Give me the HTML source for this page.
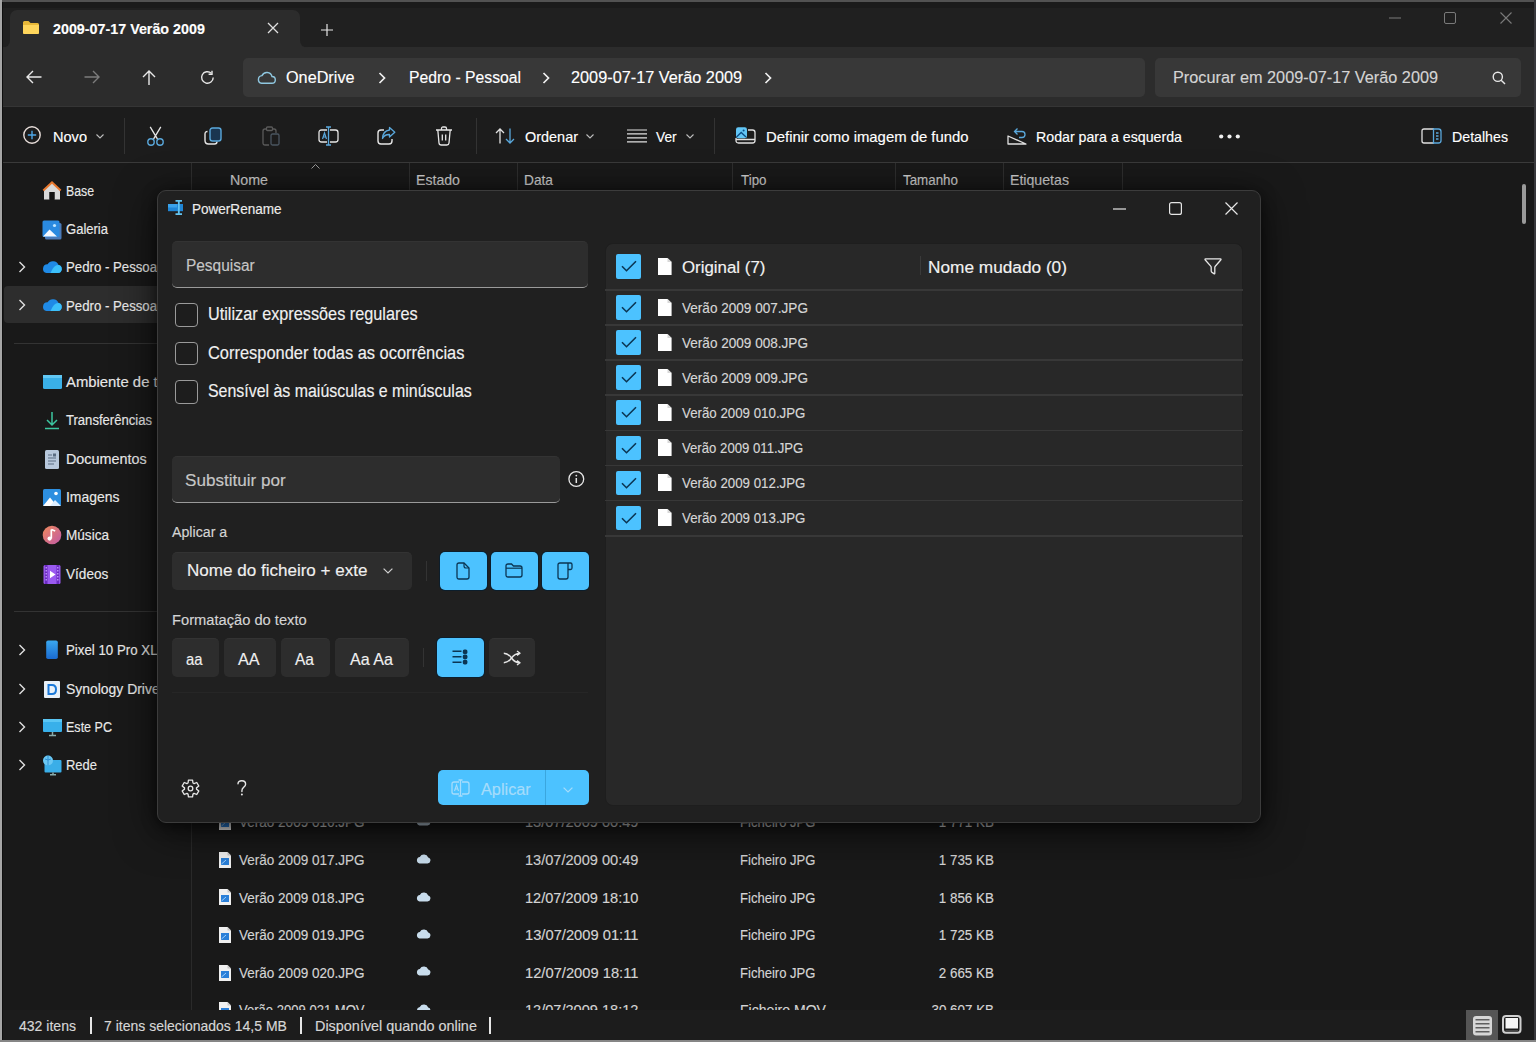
<!DOCTYPE html>
<html><head><meta charset="utf-8"><style>*{box-sizing:border-box;margin:0;padding:0}
html,body{width:1536px;height:1042px;overflow:hidden;background:#191919;font-family:"Liberation Sans",sans-serif;color:#fff}
.a{position:absolute}
.t{position:absolute;white-space:nowrap;line-height:1;-webkit-text-stroke:0.15px currentColor}
svg{position:absolute;overflow:visible}
.ico{stroke:#e8e8e8;fill:none;stroke-width:1.4}
</style></head><body>
<div class="a" style="left:0px;top:0px;width:1536px;height:47px;background:#202020;"></div>
<div class="a" style="left:0px;top:2px;width:1536px;height:6px;background:#1b1b1b;"></div>
<div class="a" style="left:0px;top:47px;width:1536px;height:60px;background:#2c2c2c;"></div>
<div class="a" style="left:0px;top:107px;width:1536px;height:55px;background:#1c1c1c;"></div>
<div class="a" style="left:0px;top:106px;width:1536px;height:1px;background:#353535;"></div>
<div class="a" style="left:0px;top:162px;width:1536px;height:1px;background:#3a3a3a;"></div>
<div class="a" style="left:0px;top:163px;width:1536px;height:849px;background:#191919;"></div>
<div class="a" style="left:0px;top:1010px;width:1536px;height:32px;background:#1c1c1c;"></div>
<div class="a" style="left:10px;top:9.5px;width:289.5px;height:38px;background:#2c2c2c;border-radius:7px 7px 0 0"></div>
<svg style="left:299.5px;top:40px" width="8" height="7.5" viewBox="0 0 8 7.5"><path d="M0 0V7.5H8Q0 7.5 0 0Z" fill="#2c2c2c"/></svg>
<svg style="left:2px;top:40px" width="8" height="7.5" viewBox="0 0 8 7.5"><path d="M8 0V7.5H0Q8 7.5 8 0Z" fill="#2c2c2c"/></svg>
<svg style="left:22px;top:20px" width="18" height="15" viewBox="0 0 18 15"><path d="M1 2.5Q1 1 2.5 1H6.5L8.5 3H15.5Q17 3 17 4.5V12.5Q17 14 15.5 14H2.5Q1 14 1 12.5Z" fill="#e8b838"/><path d="M1 5H17V12.5Q17 14 15.5 14H2.5Q1 14 1 12.5Z" fill="#ffd65c"/></svg>
<div class="t" style="left:53.00px;top:21.69px;font-size:14.71px;color:#ffffff;font-weight:bold;transform:scaleX(0.9728);transform-origin:left top;">2009-07-17 Verão 2009</div>
<svg style="left:267px;top:22px" width="12" height="12" viewBox="0 0 12 12"><path d="M1 1L11 11M11 1L1 11" stroke="#e0e0e0" stroke-width="1.3"/></svg>
<svg style="left:321px;top:23.5px" width="12" height="12" viewBox="0 0 12 12"><path d="M6 0V12M0 6H12" stroke="#e6e6e6" stroke-width="1.2"/></svg>
<svg style="left:1389px;top:17px" width="12" height="2" viewBox="0 0 12 2"><path d="M0 1H12" stroke="#7a7a7a" stroke-width="1"/></svg>
<svg style="left:1444px;top:12px" width="12" height="12" viewBox="0 0 12 12"><rect x="0.5" y="0.5" width="11" height="11" rx="1.5" stroke="#7a7a7a" fill="none"/></svg>
<svg style="left:1500px;top:12px" width="12" height="12" viewBox="0 0 12 12"><path d="M0.5 0.5L11.5 11.5M11.5 0.5L0.5 11.5" stroke="#7a7a7a" stroke-width="1.1"/></svg>
<svg style="left:26px;top:70px" width="16" height="14" viewBox="0 0 16 14"><path d="M15.5 7H1M7 1L1 7L7 13" class="ico"/></svg>
<svg style="left:84px;top:70px" width="16" height="14" viewBox="0 0 16 14"><path d="M0.5 7H15M9 1L15 7L9 13" fill="none" stroke="#7c7c7c" stroke-width="1.4"/></svg>
<svg style="left:142px;top:70px" width="14" height="15" viewBox="0 0 14 15"><path d="M7 15V1M1 7L7 1L13 7" class="ico"/></svg>
<svg style="left:200px;top:70px" width="15" height="15" viewBox="0 0 15 15"><path d="M13.2 7.5A5.8 5.8 0 1 1 11.3 3.2" class="ico"/><path d="M12 0.8V4.2H8.6" class="ico"/></svg>
<div class="a" style="left:243px;top:58px;width:902px;height:39px;background:#383838;border-radius:5px"></div>
<svg style="left:257px;top:71px" width="19" height="13" viewBox="0 0 19 13"><path d="M4.5 12.3H14.8A3.4 3.4 0 0 0 15 5.5A5.3 5.3 0 0 0 5 4.6A3.9 3.9 0 0 0 4.5 12.3Z" fill="none" stroke="#8fc7e0" stroke-width="1.4"/></svg>
<div class="t" style="left:285.70px;top:69.67px;font-size:16.86px;color:#fff;transform:scaleX(0.9621);transform-origin:left top;">OneDrive</div>
<svg style="left:378px;top:72px" width="8" height="12" viewBox="0 0 8 12"><path d="M1.5 1L6.5 6L1.5 11" fill="none" stroke="#f0f0f0" stroke-width="1.7"/></svg>
<div class="t" style="left:409.00px;top:69.67px;font-size:16.86px;color:#fff;transform:scaleX(0.9339);transform-origin:left top;">Pedro - Pessoal</div>
<svg style="left:542px;top:72px" width="8" height="12" viewBox="0 0 8 12"><path d="M1.5 1L6.5 6L1.5 11" fill="none" stroke="#f0f0f0" stroke-width="1.7"/></svg>
<div class="t" style="left:571.00px;top:69.67px;font-size:16.86px;color:#fff;transform:scaleX(0.9654);transform-origin:left top;">2009-07-17 Verão 2009</div>
<svg style="left:764px;top:72px" width="8" height="12" viewBox="0 0 8 12"><path d="M1.5 1L6.5 6L1.5 11" fill="none" stroke="#f0f0f0" stroke-width="1.7"/></svg>
<div class="a" style="left:1155px;top:58px;width:366px;height:39px;background:#383838;border-radius:5px"></div>
<div class="t" style="left:1173.00px;top:69.67px;font-size:16.86px;color:#d4d4d4;transform:scaleX(0.9652);transform-origin:left top;">Procurar em 2009-07-17 Verão 2009</div>
<svg style="left:1492px;top:71px" width="14" height="14" viewBox="0 0 14 14"><circle cx="5.8" cy="5.8" r="4.6" class="ico"/><path d="M9.2 9.2L13 13" class="ico"/></svg>
<svg style="left:23px;top:126px" width="18" height="18" viewBox="0 0 18 18"><circle cx="9" cy="9" r="8.2" fill="none" stroke="#e6dcd8" stroke-width="1.4"/><path d="M9 4.8V13.2M4.8 9H13.2" stroke="#4ea6e6" stroke-width="1.4"/></svg>
<div class="t" style="left:52.70px;top:129.61px;font-size:14.57px;color:#fff;transform:scaleX(0.9996);transform-origin:left top;">Novo</div>
<svg style="left:96px;top:134px" width="8" height="5" viewBox="0 0 8 5"><path d="M0.5 0.5L4 4L7.5 0.5" fill="none" stroke="#bdbdbd" stroke-width="1.1"/></svg>
<div class="a" style="left:124px;top:118px;width:1px;height:36px;background:#333;"></div>
<svg style="left:146px;top:126px" width="19" height="20" viewBox="0 0 19 20"><path d="M4.2 0.8L11.5 13.2M14.8 0.8L7.5 13.2" fill="none" stroke="#e6e6e6" stroke-width="1.3"/><circle cx="5" cy="16" r="3.2" fill="none" stroke="#5aa8dc" stroke-width="1.4"/><circle cx="14" cy="16" r="3.2" fill="none" stroke="#5aa8dc" stroke-width="1.4"/></svg>
<svg style="left:204px;top:127px" width="19" height="18" viewBox="0 0 19 18"><path d="M3.5 4.5Q1 4.5 1 7V13.5Q1 17 4.5 17H10.5Q13 17 13 14.5" fill="none" stroke="#e6e6e6" stroke-width="1.4"/><rect x="6" y="1" width="11" height="13" rx="2.5" fill="#1a3550" stroke="#5aa8dc" stroke-width="1.4"/></svg>
<svg style="left:262px;top:126px" width="18" height="20" viewBox="0 0 18 20"><path d="M7 19H3Q1 19 1 17V5Q1 3 3 3H4.5M10.5 3H12Q14 3 14 5V7" fill="none" stroke="#5a5a5a" stroke-width="1.3"/><rect x="4.5" y="1" width="6" height="3.5" rx="1" fill="none" stroke="#5a5a5a" stroke-width="1.3"/><rect x="9" y="8" width="8" height="11" rx="1.5" fill="none" stroke="#4a5560" stroke-width="1.3"/></svg>
<svg style="left:318px;top:126px" width="21" height="20" viewBox="0 0 21 20"><path d="M9 4H3.5Q1 4 1 6.5V13.5Q1 16 3.5 16H9M12 4H17.5Q20 4 20 6.5V13.5Q20 16 17.5 16H12" fill="none" stroke="#e6e6e6" stroke-width="1.3"/><path d="M10.5 1.5V18.5M8 1H13M8 19H13" fill="none" stroke="#5aa8dc" stroke-width="1.3"/><path d="M4.5 13L6.5 7L8.5 13M5.2 11H7.8" fill="none" stroke="#5aa8dc" stroke-width="1.2"/></svg>
<svg style="left:377px;top:126px" width="19" height="19" viewBox="0 0 19 19"><path d="M7 4H4Q1 4 1 7V15Q1 18 4 18H12Q15 18 15 15V13" fill="none" stroke="#e6e6e6" stroke-width="1.4"/><path d="M12.5 1.5L17.8 6.2L12.5 11V8.5Q7.5 8.3 5.5 12.5Q5.8 5 12.5 4Z" fill="none" stroke="#5aa8dc" stroke-width="1.3" stroke-linejoin="round"/></svg>
<svg style="left:435px;top:126px" width="18" height="20" viewBox="0 0 18 20"><path d="M1 4H17M6.5 4V2.5Q6.5 1 8 1H10Q11.5 1 11.5 2.5V4M2.8 4L4 17Q4.2 19 6.2 19H11.8Q13.8 19 14 17L15.2 4M7.3 8.5V14.5M10.7 8.5V14.5" fill="none" stroke="#e6e6e6" stroke-width="1.3"/></svg>
<div class="a" style="left:476px;top:118px;width:1px;height:36px;background:#333;"></div>
<svg style="left:495px;top:128px" width="21" height="16" viewBox="0 0 21 16"><path d="M5 15.5V1M1 5L5 1L9 5" fill="none" stroke="#e0e0e0" stroke-width="1.3"/><path d="M15 0.5V15M11 11L15 15L19 11" fill="none" stroke="#5aa8dc" stroke-width="1.3"/></svg>
<div class="t" style="left:524.60px;top:129.61px;font-size:14.57px;color:#fff;transform:scaleX(0.9916);transform-origin:left top;">Ordenar</div>
<svg style="left:586px;top:134px" width="8" height="5" viewBox="0 0 8 5"><path d="M0.5 0.5L4 4L7.5 0.5" fill="none" stroke="#bdbdbd" stroke-width="1.1"/></svg>
<svg style="left:627px;top:129px" width="20" height="14" viewBox="0 0 20 14"><path d="M0 1H20M0 4.8H20M0 8.8H20M0 12.8H20" stroke="#e0e0e0" stroke-width="1.2"/></svg>
<div class="t" style="left:656.00px;top:129.61px;font-size:14.57px;color:#fff;transform:scaleX(0.9419);transform-origin:left top;">Ver</div>
<svg style="left:686px;top:134px" width="8" height="5" viewBox="0 0 8 5"><path d="M0.5 0.5L4 4L7.5 0.5" fill="none" stroke="#bdbdbd" stroke-width="1.1"/></svg>
<div class="a" style="left:714px;top:118px;width:1px;height:36px;background:#333;"></div>
<svg style="left:735px;top:126px" width="21" height="18" viewBox="0 0 21 18"><rect x="1" y="1.2" width="11" height="11" rx="2.2" fill="#62c6f6"/><path d="M1.5 11L6.2 6.5L11 11" fill="none" stroke="#0b4d86" stroke-width="1.3"/><circle cx="8.6" cy="4.4" r="1" fill="#0b4d86"/><path d="M13 4H17.5Q20 4 20 6.5V14.5Q20 17 17.5 17H3.5Q1 17 1 14.5V12M1 13.5H20" fill="none" stroke="#e0e0e0" stroke-width="1.3"/></svg>
<div class="t" style="left:765.60px;top:129.61px;font-size:14.57px;color:#fff;transform:scaleX(1.0216);transform-origin:left top;">Definir como imagem de fundo</div>
<svg style="left:1007px;top:127px" width="20" height="18" viewBox="0 0 20 18"><path d="M1 17H19L1 9Z" fill="none" stroke="#e0e0e0" stroke-width="1.3" stroke-linejoin="round"/><path d="M8 4.5H15Q18 4.5 18 7.5Q18 10.5 15 10.5H12M10.5 1.5L7.5 4.5L10.5 7.5" fill="none" stroke="#5aa8dc" stroke-width="1.3"/></svg>
<div class="t" style="left:1036.00px;top:129.61px;font-size:14.57px;color:#fff;transform:scaleX(0.9743);transform-origin:left top;">Rodar para a esquerda</div>
<svg style="left:1219px;top:134px" width="21" height="5" viewBox="0 0 21 5"><circle cx="2.2" cy="2.5" r="2.1" fill="#f0f0f0"/><circle cx="10.5" cy="2.5" r="2.1" fill="#f0f0f0"/><circle cx="18.8" cy="2.5" r="2.1" fill="#f0f0f0"/></svg>
<svg style="left:1421px;top:128px" width="21" height="16" viewBox="0 0 21 16"><path d="M13 1H3Q1 1 1 3V13Q1 15 3 15H13" fill="none" stroke="#e0e0e0" stroke-width="1.3"/><path d="M12.5 1H17.5Q20 1 20 3.5V12.5Q20 15 17.5 15H12.5ZM15 5H17.5M15 8H17.5M15 11H17.5" fill="none" stroke="#5aa8dc" stroke-width="1.3"/></svg>
<div class="t" style="left:1451.60px;top:129.61px;font-size:14.57px;color:#fff;transform:scaleX(0.9738);transform-origin:left top;">Detalhes</div>
<div class="a" style="left:191px;top:163px;width:1px;height:28px;background:#2e2e2e;"></div>
<div class="a" style="left:191px;top:191px;width:1px;height:819px;background:#2a2a2a;"></div>
<div class="t" style="left:230.00px;top:173.84px;font-size:13.71px;color:#cccccc;transform:scaleX(1.0388);transform-origin:left top;">Nome</div>
<svg style="left:311px;top:164px" width="9" height="5" viewBox="0 0 9 5"><path d="M0.5 4.5L4.5 0.5L8.5 4.5" fill="none" stroke="#9a9a9a" stroke-width="1"/></svg>
<div class="a" style="left:409px;top:163px;width:1px;height:28px;background:#2e2e2e;"></div>
<div class="a" style="left:517px;top:163px;width:1px;height:28px;background:#2e2e2e;"></div>
<div class="a" style="left:732px;top:163px;width:1px;height:28px;background:#2e2e2e;"></div>
<div class="a" style="left:895px;top:163px;width:1px;height:28px;background:#2e2e2e;"></div>
<div class="a" style="left:1003px;top:163px;width:1px;height:28px;background:#2e2e2e;"></div>
<div class="a" style="left:1122px;top:163px;width:1px;height:28px;background:#2e2e2e;"></div>
<div class="t" style="left:416.00px;top:173.84px;font-size:13.71px;color:#cccccc;transform:scaleX(1.0306);transform-origin:left top;">Estado</div>
<div class="t" style="left:524.00px;top:173.84px;font-size:13.71px;color:#cccccc;transform:scaleX(1.0011);transform-origin:left top;">Data</div>
<div class="t" style="left:741.00px;top:173.84px;font-size:13.71px;color:#cccccc;transform:scaleX(0.9745);transform-origin:left top;">Tipo</div>
<div class="t" style="left:903.00px;top:173.84px;font-size:13.71px;color:#cccccc;transform:scaleX(0.9750);transform-origin:left top;">Tamanho</div>
<div class="t" style="left:1010.00px;top:173.84px;font-size:13.71px;color:#cccccc;transform:scaleX(1.0319);transform-origin:left top;">Etiquetas</div>
<div class="a" style="left:1522px;top:184px;width:4px;height:40px;background:#9a9a9a;border-radius:2px"></div>
<div class="a" style="left:4px;top:286px;width:187px;height:37px;background:#2d2d2d;border-radius:4px"></div>
<div class="a" style="left:14px;top:343px;width:177px;height:1px;background:#333333;"></div>
<div class="a" style="left:14px;top:611px;width:177px;height:1px;background:#333333;"></div>
<svg style="left:42px;top:180px" width="21" height="21" viewBox="0 0 21 21"><path d="M2 9.5V19.5H7.5V12H12.5V19.5H18V9.5L10 2.5Z" fill="#d9d9d9"/><path d="M0.6 9.8L10 1L19.4 9.8L18 11.2L10 3.8L2 11.2Z" fill="#e8782e"/><path d="M7.5 12H12.5V19.5H7.5Z" fill="#141414"/></svg>
<div class="t" style="left:66.00px;top:183.56px;font-size:14.29px;color:#e8e8e8;transform:scaleX(0.8599);transform-origin:left top;">Base</div>
<svg style="left:42px;top:219px" width="21" height="21" viewBox="0 0 21 21"><rect x="3" y="4" width="16.5" height="16.5" rx="1.5" fill="#4a7ab8"/><rect x="0.5" y="1.5" width="17" height="16.5" rx="1.5" fill="#2a8ae0"/><path d="M1 17.5L7.5 10.5L15 17.5Z" fill="#f4f8ff"/><circle cx="12.5" cy="6.5" r="1.6" fill="#bfe6ff"/></svg>
<div class="t" style="left:66.00px;top:221.88px;font-size:14.29px;color:#e8e8e8;transform:scaleX(0.9121);transform-origin:left top;">Galeria</div>
<svg style="left:18px;top:261px" width="8" height="12" viewBox="0 0 8 12"><path d="M1.5 1L6.5 6L1.5 11" fill="none" stroke="#e0e0e0" stroke-width="1.4"/></svg>
<svg style="left:42px;top:257px" width="21" height="21" viewBox="0 0 21 21"><path d="M4.5 16H16A4 4 0 0 0 16.6 8.1A6.2 6.2 0 0 0 5.6 7.3A4.4 4.4 0 0 0 4.5 16Z" fill="#1f8ae6"/><path d="M8.5 16H16A4 4 0 0 0 16.6 8.1Q12 7.5 8.5 16Z" fill="#3cc0fa"/></svg>
<div class="t" style="left:66.00px;top:260.20px;font-size:14.29px;color:#e8e8e8;transform:scaleX(0.9250);transform-origin:left top;">Pedro - Pessoal</div>
<svg style="left:18px;top:299px" width="8" height="12" viewBox="0 0 8 12"><path d="M1.5 1L6.5 6L1.5 11" fill="none" stroke="#e0e0e0" stroke-width="1.4"/></svg>
<svg style="left:42px;top:295px" width="21" height="21" viewBox="0 0 21 21"><path d="M4.5 16H16A4 4 0 0 0 16.6 8.1A6.2 6.2 0 0 0 5.6 7.3A4.4 4.4 0 0 0 4.5 16Z" fill="#1f8ae6"/><path d="M8.5 16H16A4 4 0 0 0 16.6 8.1Q12 7.5 8.5 16Z" fill="#3cc0fa"/></svg>
<div class="t" style="left:66.00px;top:298.52px;font-size:14.29px;color:#e8e8e8;transform:scaleX(0.9250);transform-origin:left top;">Pedro - Pessoal</div>
<svg style="left:42px;top:372px" width="21" height="21" viewBox="0 0 21 21"><rect x="1" y="3" width="19" height="14" rx="1.5" fill="#3ab0e8"/><rect x="1" y="3" width="19" height="3" fill="#62c8f4"/></svg>
<div class="t" style="left:66.00px;top:375.16px;font-size:14.29px;color:#e8e8e8;transform:scaleX(1.0400);transform-origin:left top;">Ambiente de trabalho</div>
<svg style="left:42px;top:410px" width="21" height="21" viewBox="0 0 21 21"><path d="M10 2V15M5 10L10 15L15 10M3 18.5H17" fill="none" stroke="#3cc6a0" stroke-width="1.5"/></svg>
<div class="t" style="left:66.00px;top:413.48px;font-size:14.29px;color:#e8e8e8;transform:scaleX(0.9154);transform-origin:left top;">Transferências</div>
<svg style="left:42px;top:449px" width="21" height="21" viewBox="0 0 21 21"><rect x="3" y="1" width="14" height="19" rx="1.5" fill="#b8c8dc"/><path d="M6 6H10M6 9H14M6 12H14M6 15H12" stroke="#5a6c82" stroke-width="1.2"/><rect x="11" y="4.5" width="3" height="3" fill="#5a6c82"/></svg>
<div class="t" style="left:66.00px;top:451.80px;font-size:14.29px;color:#e8e8e8;transform:scaleX(1.0051);transform-origin:left top;">Documentos</div>
<svg style="left:42px;top:487px" width="21" height="21" viewBox="0 0 21 21"><rect x="1" y="2" width="18" height="17" rx="1.5" fill="#2d8fe0"/><path d="M1 19L8 10.5L15 19Z" fill="#fff"/><path d="M8 19L13 13L19 19Z" fill="#dfefff"/><circle cx="14" cy="6.5" r="1.8" fill="#fff"/></svg>
<div class="t" style="left:66.00px;top:490.12px;font-size:14.29px;color:#e8e8e8;transform:scaleX(0.9747);transform-origin:left top;">Imagens</div>
<svg style="left:42px;top:525px" width="21" height="21" viewBox="0 0 21 21"><defs><linearGradient id="gmu" x1="0" y1="0" x2="1" y2="1"><stop offset="0" stop-color="#f08a5a"/><stop offset="1" stop-color="#c05aa8"/></linearGradient></defs><circle cx="10" cy="10" r="9.3" fill="url(#gmu)"/><path d="M9.3 4.5V13.5M9.3 4.5L13.2 6" stroke="#fff" stroke-width="1.7" fill="none"/><circle cx="7.6" cy="13.6" r="2.1" fill="#fff"/></svg>
<div class="t" style="left:66.00px;top:528.44px;font-size:14.29px;color:#e8e8e8;transform:scaleX(0.9503);transform-origin:left top;">Música</div>
<svg style="left:42px;top:564px" width="21" height="21" viewBox="0 0 21 21"><rect x="1.5" y="1" width="17" height="19" rx="1.5" fill="#9a5af0"/><path d="M4.2 1V20M15.8 1V20" stroke="#6a2ac0" stroke-width="2.6"/><path d="M4.2 3V18M15.8 3V18" stroke="#c8a8ff" stroke-width="1.2" stroke-dasharray="1.5 1.5"/><path d="M8 6.8L13.5 10.5L8 14.2Z" fill="#fff"/></svg>
<div class="t" style="left:66.00px;top:566.76px;font-size:14.29px;color:#e8e8e8;transform:scaleX(0.9534);transform-origin:left top;">Vídeos</div>
<svg style="left:18px;top:644px" width="8" height="12" viewBox="0 0 8 12"><path d="M1.5 1L6.5 6L1.5 11" fill="none" stroke="#e0e0e0" stroke-width="1.4"/></svg>
<svg style="left:42px;top:640px" width="21" height="21" viewBox="0 0 21 21"><defs><linearGradient id="gph" x1="0" y1="0" x2="0" y2="1"><stop offset="0" stop-color="#3aa8f0"/><stop offset="1" stop-color="#1a6ad0"/></linearGradient></defs><rect x="4.2" y="0.5" width="11.6" height="18.6" rx="1.8" fill="url(#gph)"/></svg>
<div class="t" style="left:66.00px;top:643.40px;font-size:14.29px;color:#e8e8e8;transform:scaleX(0.9300);transform-origin:left top;">Pixel 10 Pro XL</div>
<svg style="left:18px;top:683px" width="8" height="12" viewBox="0 0 8 12"><path d="M1.5 1L6.5 6L1.5 11" fill="none" stroke="#e0e0e0" stroke-width="1.4"/></svg>
<svg style="left:42px;top:679px" width="21" height="21" viewBox="0 0 21 21"><rect x="2" y="2" width="16" height="17" rx="1" fill="#e8f0f8"/><path d="M6.5 6H10Q14 6 14 10.5Q14 15 10 15H6.5Z" fill="none" stroke="#1a78d8" stroke-width="2"/></svg>
<div class="t" style="left:66.00px;top:681.72px;font-size:14.29px;color:#e8e8e8;transform:scaleX(0.9750);transform-origin:left top;">Synology Drive</div>
<svg style="left:18px;top:721px" width="8" height="12" viewBox="0 0 8 12"><path d="M1.5 1L6.5 6L1.5 11" fill="none" stroke="#e0e0e0" stroke-width="1.4"/></svg>
<svg style="left:42px;top:717px" width="21" height="21" viewBox="0 0 21 21"><rect x="1" y="2" width="19" height="13" rx="1" fill="#38b0ea"/><rect x="1" y="2" width="19" height="3" fill="#5ac6f4"/><path d="M7 18.5H14M10.5 15V18.5" stroke="#8aa" stroke-width="1.5"/></svg>
<div class="t" style="left:66.00px;top:720.04px;font-size:14.29px;color:#e8e8e8;transform:scaleX(0.8779);transform-origin:left top;">Este PC</div>
<svg style="left:18px;top:759px" width="8" height="12" viewBox="0 0 8 12"><path d="M1.5 1L6.5 6L1.5 11" fill="none" stroke="#e0e0e0" stroke-width="1.4"/></svg>
<svg style="left:42px;top:755px" width="21" height="21" viewBox="0 0 21 21"><rect x="2.5" y="5" width="17" height="12.5" rx="1" fill="#3aaee8"/><path d="M8 19.8H14M11 17.5V19.8" stroke="#8aa" stroke-width="1.5"/><circle cx="6" cy="5.5" r="5" fill="#6ac8f4"/><path d="M3 4Q6 6 9 4M6 0.5V10.5" stroke="#2a8ad0" stroke-width="0.9" fill="none"/></svg>
<div class="t" style="left:66.00px;top:758.36px;font-size:14.29px;color:#e8e8e8;transform:scaleX(0.9078);transform-origin:left top;">Rede</div>
<div class="a" style="left:0;top:0;width:1536px;height:1010px;overflow:hidden">
<svg style="left:218px;top:813px" width="14" height="18" viewBox="0 0 14 18"><path d="M1 1H9.5L13 4.5V17H1Z" fill="#f0f0f0"/><path d="M9.5 1V4.5H13" fill="#c8c8c8"/><rect x="3" y="7" width="8" height="7" fill="#2a7fd8"/><path d="M3.5 13L8 9" stroke="#9cd0ff" stroke-width="1"/></svg>
<div class="t" style="left:239.00px;top:815.11px;font-size:14.57px;color:#d4d4d4;transform:scaleX(0.9284);transform-origin:left top;">Verão 2009 016.JPG</div>
<svg style="left:416px;top:816px" width="15" height="10" viewBox="0 0 15 10"><path d="M3.5 9.5H11.5A3 3 0 0 0 12.2 3.6A4.6 4.6 0 0 0 3.8 3A3.3 3.3 0 0 0 3.5 9.5Z" fill="#c8dcec"/></svg>
<div class="t" style="left:525.00px;top:815.11px;font-size:14.57px;color:#d4d4d4;transform:scaleX(1.0006);transform-origin:left top;">13/07/2009 00:49</div>
<div class="t" style="left:740.00px;top:815.11px;font-size:14.57px;color:#d4d4d4;transform:scaleX(0.8966);transform-origin:left top;">Ficheiro JPG</div>
<div class="t" style="right:542.00px;top:815.11px;font-size:14.57px;color:#d4d4d4;transform:scaleX(0.9200);transform-origin:right top;">1 771 KB</div>
<svg style="left:218px;top:851px" width="14" height="18" viewBox="0 0 14 18"><path d="M1 1H9.5L13 4.5V17H1Z" fill="#f0f0f0"/><path d="M9.5 1V4.5H13" fill="#c8c8c8"/><rect x="3" y="7" width="8" height="7" fill="#2a7fd8"/><path d="M3.5 13L8 9" stroke="#9cd0ff" stroke-width="1"/></svg>
<div class="t" style="left:239.00px;top:853.11px;font-size:14.57px;color:#d4d4d4;transform:scaleX(0.9284);transform-origin:left top;">Verão 2009 017.JPG</div>
<svg style="left:416px;top:854px" width="15" height="10" viewBox="0 0 15 10"><path d="M3.5 9.5H11.5A3 3 0 0 0 12.2 3.6A4.6 4.6 0 0 0 3.8 3A3.3 3.3 0 0 0 3.5 9.5Z" fill="#c8dcec"/></svg>
<div class="t" style="left:525.00px;top:853.11px;font-size:14.57px;color:#d4d4d4;transform:scaleX(1.0006);transform-origin:left top;">13/07/2009 00:49</div>
<div class="t" style="left:740.00px;top:853.11px;font-size:14.57px;color:#d4d4d4;transform:scaleX(0.8966);transform-origin:left top;">Ficheiro JPG</div>
<div class="t" style="right:542.00px;top:853.11px;font-size:14.57px;color:#d4d4d4;transform:scaleX(0.9200);transform-origin:right top;">1 735 KB</div>
<svg style="left:218px;top:888px" width="14" height="18" viewBox="0 0 14 18"><path d="M1 1H9.5L13 4.5V17H1Z" fill="#f0f0f0"/><path d="M9.5 1V4.5H13" fill="#c8c8c8"/><rect x="3" y="7" width="8" height="7" fill="#2a7fd8"/><path d="M3.5 13L8 9" stroke="#9cd0ff" stroke-width="1"/></svg>
<div class="t" style="left:239.00px;top:890.61px;font-size:14.57px;color:#d4d4d4;transform:scaleX(0.9284);transform-origin:left top;">Verão 2009 018.JPG</div>
<svg style="left:416px;top:892px" width="15" height="10" viewBox="0 0 15 10"><path d="M3.5 9.5H11.5A3 3 0 0 0 12.2 3.6A4.6 4.6 0 0 0 3.8 3A3.3 3.3 0 0 0 3.5 9.5Z" fill="#c8dcec"/></svg>
<div class="t" style="left:525.00px;top:890.61px;font-size:14.57px;color:#d4d4d4;transform:scaleX(1.0006);transform-origin:left top;">12/07/2009 18:10</div>
<div class="t" style="left:740.00px;top:890.61px;font-size:14.57px;color:#d4d4d4;transform:scaleX(0.8966);transform-origin:left top;">Ficheiro JPG</div>
<div class="t" style="right:542.00px;top:890.61px;font-size:14.57px;color:#d4d4d4;transform:scaleX(0.9200);transform-origin:right top;">1 856 KB</div>
<svg style="left:218px;top:926px" width="14" height="18" viewBox="0 0 14 18"><path d="M1 1H9.5L13 4.5V17H1Z" fill="#f0f0f0"/><path d="M9.5 1V4.5H13" fill="#c8c8c8"/><rect x="3" y="7" width="8" height="7" fill="#2a7fd8"/><path d="M3.5 13L8 9" stroke="#9cd0ff" stroke-width="1"/></svg>
<div class="t" style="left:239.00px;top:928.11px;font-size:14.57px;color:#d4d4d4;transform:scaleX(0.9284);transform-origin:left top;">Verão 2009 019.JPG</div>
<svg style="left:416px;top:929px" width="15" height="10" viewBox="0 0 15 10"><path d="M3.5 9.5H11.5A3 3 0 0 0 12.2 3.6A4.6 4.6 0 0 0 3.8 3A3.3 3.3 0 0 0 3.5 9.5Z" fill="#c8dcec"/></svg>
<div class="t" style="left:525.00px;top:928.11px;font-size:14.57px;color:#d4d4d4;transform:scaleX(1.0103);transform-origin:left top;">13/07/2009 01:11</div>
<div class="t" style="left:740.00px;top:928.11px;font-size:14.57px;color:#d4d4d4;transform:scaleX(0.8966);transform-origin:left top;">Ficheiro JPG</div>
<div class="t" style="right:542.00px;top:928.11px;font-size:14.57px;color:#d4d4d4;transform:scaleX(0.9200);transform-origin:right top;">1 725 KB</div>
<svg style="left:218px;top:964px" width="14" height="18" viewBox="0 0 14 18"><path d="M1 1H9.5L13 4.5V17H1Z" fill="#f0f0f0"/><path d="M9.5 1V4.5H13" fill="#c8c8c8"/><rect x="3" y="7" width="8" height="7" fill="#2a7fd8"/><path d="M3.5 13L8 9" stroke="#9cd0ff" stroke-width="1"/></svg>
<div class="t" style="left:239.00px;top:965.61px;font-size:14.57px;color:#d4d4d4;transform:scaleX(0.9284);transform-origin:left top;">Verão 2009 020.JPG</div>
<svg style="left:416px;top:966px" width="15" height="10" viewBox="0 0 15 10"><path d="M3.5 9.5H11.5A3 3 0 0 0 12.2 3.6A4.6 4.6 0 0 0 3.8 3A3.3 3.3 0 0 0 3.5 9.5Z" fill="#c8dcec"/></svg>
<div class="t" style="left:525.00px;top:965.61px;font-size:14.57px;color:#d4d4d4;transform:scaleX(1.0103);transform-origin:left top;">12/07/2009 18:11</div>
<div class="t" style="left:740.00px;top:965.61px;font-size:14.57px;color:#d4d4d4;transform:scaleX(0.8966);transform-origin:left top;">Ficheiro JPG</div>
<div class="t" style="right:542.00px;top:965.61px;font-size:14.57px;color:#d4d4d4;transform:scaleX(0.9200);transform-origin:right top;">2 665 KB</div>
<svg style="left:218px;top:1001px" width="14" height="18" viewBox="0 0 14 18"><path d="M1 1H9.5L13 4.5V17H1Z" fill="#f0f0f0"/><path d="M9.5 1V4.5H13" fill="#c8c8c8"/><rect x="3" y="7" width="8" height="7" fill="#2a7fd8"/><path d="M3.5 13L8 9" stroke="#9cd0ff" stroke-width="1"/></svg>
<div class="t" style="left:239.00px;top:1003.11px;font-size:14.57px;color:#d4d4d4;transform:scaleX(0.8963);transform-origin:left top;">Verão 2009 021.MOV</div>
<svg style="left:416px;top:1004px" width="15" height="10" viewBox="0 0 15 10"><path d="M3.5 9.5H11.5A3 3 0 0 0 12.2 3.6A4.6 4.6 0 0 0 3.8 3A3.3 3.3 0 0 0 3.5 9.5Z" fill="#c8dcec"/></svg>
<div class="t" style="left:525.00px;top:1003.11px;font-size:14.57px;color:#d4d4d4;transform:scaleX(1.0006);transform-origin:left top;">12/07/2009 18:12</div>
<div class="t" style="left:740.00px;top:1003.11px;font-size:14.57px;color:#d4d4d4;transform:scaleX(0.9656);transform-origin:left top;">Ficheiro MOV</div>
<div class="t" style="right:542.00px;top:1003.11px;font-size:14.57px;color:#d4d4d4;transform:scaleX(0.9200);transform-origin:right top;">30 607 KB</div>
</div>
<div class="t" style="left:19.00px;top:1018.61px;font-size:14.57px;color:#d6d6d6;transform:scaleX(0.9639);transform-origin:left top;">432 itens</div>
<div class="a" style="left:90px;top:1017px;width:2px;height:17px;background:#e6e6e6;"></div>
<div class="t" style="left:104.00px;top:1018.61px;font-size:14.57px;color:#d6d6d6;transform:scaleX(0.9614);transform-origin:left top;">7 itens selecionados 14,5 MB</div>
<div class="a" style="left:300px;top:1017px;width:2px;height:17px;background:#e6e6e6;"></div>
<div class="t" style="left:315.00px;top:1018.61px;font-size:14.57px;color:#d6d6d6;transform:scaleX(0.9900);transform-origin:left top;">Disponível quando online</div>
<div class="a" style="left:489px;top:1017px;width:2px;height:17px;background:#e6e6e6;"></div>
<div class="a" style="left:1466px;top:1010px;width:32px;height:30px;background:#555555;"></div>
<svg style="left:1473px;top:1016px" width="19" height="20" viewBox="0 0 19 20"><rect x="0" y="0" width="19" height="19.6" rx="3" fill="#d6d6d6"/><path d="M2.5 3.8H16.5M2.5 7.8H16.5M2.5 11.8H16.5M2.5 15.8H16.5" stroke="#5e5e5e" stroke-width="1.6"/></svg>
<svg style="left:1502px;top:1015px" width="20" height="19" viewBox="0 0 20 19"><rect x="1" y="1" width="17.5" height="16.8" rx="3" fill="none" stroke="#d0d0d0" stroke-width="2"/><rect x="3.5" y="3" width="12.5" height="10.5" fill="#f6f6f6"/><path d="M3.5 15.8H16" stroke="#5a5a5a" stroke-width="1"/></svg>
<div class="a" style="left:0px;top:0px;width:1536px;height:2px;background:#525252;z-index:50"></div>
<div class="a" style="left:0px;top:0px;width:2px;height:1042px;background:#a6a6a6;z-index:50"></div>
<div class="a" style="left:2px;top:2px;width:1px;height:1038px;background:#0e0e0e;z-index:50"></div>
<div class="a" style="left:1534px;top:0px;width:2px;height:1042px;background:#38383c;z-index:50"></div>
<div class="a" style="left:0px;top:1040px;width:1536px;height:2px;background:#868686;z-index:50"></div>
<div class="a" style="left:156.5px;top:190px;width:1104.5px;height:633px;background:#202020;border:1.5px solid #3c3c3c;border-radius:9px;box-shadow:0 8px 40px rgba(0,0,0,0.6),0 3px 14px rgba(0,0,0,0.5);z-index:10"></div>
<div class="a" style="left:0;top:0;width:1536px;height:1042px;z-index:11">
<svg style="left:167px;top:199px" width="17" height="17" viewBox="0 0 17 17"><rect x="1" y="5" width="15" height="7.2" fill="#1f86d6"/><rect x="1" y="5" width="9" height="3.5" fill="#3aa2ea"/><path d="M8.5 1.8H15M11.8 1.8V15.2M8.5 15.2H15" stroke="#62c4f2" stroke-width="1.8" fill="none"/></svg>
<div class="t" style="left:192.00px;top:201.50px;font-size:14.00px;color:#ececec;transform:scaleX(0.9666);transform-origin:left top;">PowerRename</div>
<svg style="left:1113px;top:208px" width="13" height="2" viewBox="0 0 13 2"><path d="M0 1H13" stroke="#e6e6e6" stroke-width="1.2"/></svg>
<svg style="left:1169px;top:202px" width="13" height="13" viewBox="0 0 13 13"><rect x="0.6" y="0.6" width="11.8" height="11.8" rx="2" fill="none" stroke="#e6e6e6" stroke-width="1.2"/></svg>
<svg style="left:1225px;top:202px" width="13" height="13" viewBox="0 0 13 13"><path d="M0.5 0.5L12.5 12.5M12.5 0.5L0.5 12.5" stroke="#e6e6e6" stroke-width="1.2"/></svg>
<div class="a" style="left:172px;top:241px;width:416px;height:47px;background:#2d2d2d;border-radius:5px;border-top:1px solid #333;border-bottom:1.5px solid #9a9a9a"></div>
<div class="t" style="left:186.20px;top:258.00px;font-size:16.00px;color:#c6c6c6;transform:scaleX(0.9642);transform-origin:left top;">Pesquisar</div>
<div class="a" style="left:174.5px;top:303.0px;width:23.5px;height:23.5px;background:#1d1d1d;border:1.3px solid #9a9a9a;border-radius:4px"></div>
<div class="t" style="left:208.20px;top:306.19px;font-size:17.43px;color:#f0f0f0;transform:scaleX(0.9328);transform-origin:left top;">Utilizar expressões regulares</div>
<div class="a" style="left:174.5px;top:341.5px;width:23.5px;height:23.5px;background:#1d1d1d;border:1.3px solid #9a9a9a;border-radius:4px"></div>
<div class="t" style="left:208.20px;top:344.69px;font-size:17.43px;color:#f0f0f0;transform:scaleX(0.9423);transform-origin:left top;">Corresponder todas as ocorrências</div>
<div class="a" style="left:174.5px;top:380.0px;width:23.5px;height:23.5px;background:#1d1d1d;border:1.3px solid #9a9a9a;border-radius:4px"></div>
<div class="t" style="left:208.20px;top:383.19px;font-size:17.43px;color:#f0f0f0;transform:scaleX(0.9139);transform-origin:left top;">Sensível às maiúsculas e minúsculas</div>
<div class="a" style="left:172px;top:456px;width:388px;height:47px;background:#2d2d2d;border-radius:5px;border-top:1px solid #333;border-bottom:1.5px solid #9a9a9a"></div>
<div class="t" style="left:185.30px;top:473.30px;font-size:16.00px;color:#c6c6c6;transform:scaleX(1.0683);transform-origin:left top;">Substituir por</div>
<svg style="left:568px;top:471px" width="17" height="17" viewBox="0 0 17 17"><circle cx="8.3" cy="8" r="7.4" fill="none" stroke="#e6e6e6" stroke-width="1.3"/><path d="M8.3 7V12" stroke="#e6e6e6" stroke-width="1.5"/><circle cx="8.3" cy="4.6" r="0.9" fill="#e6e6e6"/></svg>
<div class="t" style="left:172.30px;top:525.84px;font-size:13.71px;color:#d4d4d4;transform:scaleX(1.0365);transform-origin:left top;">Aplicar a</div>
<div class="a" style="left:172px;top:552px;width:239.5px;height:38px;background:#2d2d2d;border-radius:5px;border-top:1px solid #333"></div>
<div class="t" style="left:186.90px;top:563.10px;font-size:16.00px;color:#f0f0f0;transform:scaleX(1.0654);transform-origin:left top;">Nome do ficheiro + exte</div>
<svg style="left:383px;top:568px" width="10" height="6" viewBox="0 0 10 6"><path d="M0.6 0.6L5 5L9.4 0.6" fill="none" stroke="#d0d0d0" stroke-width="1.2"/></svg>
<div class="a" style="left:426px;top:561px;width:1px;height:20px;background:#333333;"></div>
<div class="a" style="left:440px;top:552px;width:46.5px;height:38px;background:#4cc2ff;border-radius:5px;box-shadow:0 0 0 1px #0c1e2c"></div>
<div class="a" style="left:491px;top:552px;width:46.5px;height:38px;background:#4cc2ff;border-radius:5px;box-shadow:0 0 0 1px #0c1e2c"></div>
<div class="a" style="left:542px;top:552px;width:46.5px;height:38px;background:#4cc2ff;border-radius:5px;box-shadow:0 0 0 1px #0c1e2c"></div>
<svg style="left:456px;top:562px" width="14" height="18" viewBox="0 0 14 18"><path d="M1 3Q1 1 3 1H8L13 6V15Q13 17 11 17H3Q1 17 1 15Z" fill="none" stroke="#0b3553" stroke-width="1.3"/><path d="M8 1V4Q8 6 10 6H13" fill="none" stroke="#0b3553" stroke-width="1.2"/></svg>
<svg style="left:505px;top:563px" width="18" height="15" viewBox="0 0 18 15"><path d="M1 3Q1 1 3 1H6.5L8.5 3H15Q17 3 17 5V12Q17 14 15 14H3Q1 14 1 12Z" fill="none" stroke="#0b3553" stroke-width="1.3"/><path d="M1 5.2H17" stroke="#0b3553" stroke-width="1.2"/></svg>
<svg style="left:557px;top:562px" width="16" height="18" viewBox="0 0 16 18"><path d="M11 1H3Q1 1 1 3V15Q1 17 3 17H9Q11 17 11 15V1" fill="none" stroke="#0b3553" stroke-width="1.3"/><path d="M11 1H13.5Q15 1 15 2.5V6Q15 7.5 13.5 7.5H11" fill="none" stroke="#0b3553" stroke-width="1.3"/></svg>
<div class="t" style="left:172.00px;top:613.30px;font-size:14.00px;color:#d4d4d4;transform:scaleX(1.0492);transform-origin:left top;">Formatação do texto</div>
<div class="a" style="left:172px;top:638px;width:47px;height:38.5px;background:#2d2d2d;border-radius:5px;border-top:1px solid #333"></div>
<div class="t" style="left:186.20px;top:650.88px;font-size:16.14px;color:#f0f0f0;transform:scaleX(0.9190);transform-origin:left top;">aa</div>
<div class="a" style="left:224.2px;top:638px;width:51.5px;height:38.5px;background:#2d2d2d;border-radius:5px;border-top:1px solid #333"></div>
<div class="t" style="left:238.30px;top:650.88px;font-size:16.14px;color:#f0f0f0;transform:scaleX(1.0076);transform-origin:left top;">AA</div>
<div class="a" style="left:281px;top:638px;width:49px;height:38.5px;background:#2d2d2d;border-radius:5px;border-top:1px solid #333"></div>
<div class="t" style="left:295.00px;top:650.88px;font-size:16.14px;color:#f0f0f0;transform:scaleX(0.9623);transform-origin:left top;">Aa</div>
<div class="a" style="left:335px;top:638px;width:74px;height:38.5px;background:#2d2d2d;border-radius:5px;border-top:1px solid #333"></div>
<div class="t" style="left:349.80px;top:650.88px;font-size:16.14px;color:#f0f0f0;transform:scaleX(0.9981);transform-origin:left top;">Aa Aa</div>
<div class="a" style="left:423px;top:648px;width:1px;height:19px;background:#333333;"></div>
<div class="a" style="left:437.3px;top:638px;width:46.5px;height:38.5px;background:#4cc2ff;border-radius:5px;box-shadow:0 0 0 1px #0c1e2c"></div>
<svg style="left:452px;top:648.5px" width="17" height="16" viewBox="0 0 17 16"><path d="M0.5 2.2H9.5M0.5 7.8H9.5M0.5 13.2H9.5" stroke="#0b3553" stroke-width="1.4"/><rect x="10.8" y="0.4" width="4.6" height="4.6" rx="1.6" fill="#0b3553"/><rect x="10.8" y="5.6" width="4.6" height="4.6" rx="1.6" fill="#0b3553"/><rect x="10.8" y="10.8" width="4.6" height="4.6" rx="1.6" fill="#0b3553"/></svg>
<div class="a" style="left:489.4px;top:638px;width:45.5px;height:38.5px;background:#2d2d2d;border-radius:5px;border-top:1px solid #333"></div>
<svg style="left:503px;top:650.5px" width="18" height="14" viewBox="0 0 18 14"><path d="M0.8 2.2Q5.5 2.5 8.5 7Q11.5 11.5 17 11.8M0.8 11.8Q5.5 11.5 8.5 7Q11.5 2.5 17 2.2M14 0L17 2.2L14 4.4M14 9.6L17 11.8L14 14" fill="none" stroke="#e6e6e6" stroke-width="1.4" stroke-linejoin="round"/></svg>
<div class="a" style="left:172px;top:692px;width:416px;height:1px;background:#262626;"></div>
<svg style="left:181px;top:778.5px" width="19" height="19" viewBox="0 0 19 19"><path d="M7.05 4.02 L7.43 1.05 L11.57 1.05 L11.95 4.02 A6.0 6.0 0 0 1 13.02 4.64 L15.78 3.48 L17.85 7.07 L15.47 8.88 A6.0 6.0 0 0 1 15.47 10.12 L17.85 11.93 L15.78 15.52 L13.02 14.36 A6.0 6.0 0 0 1 11.95 14.98 L11.57 17.95 L7.43 17.95 L7.05 14.98 A6.0 6.0 0 0 1 5.98 14.36 L3.22 15.52 L1.15 11.93 L3.53 10.12 A6.0 6.0 0 0 1 3.53 8.88 L1.15 7.07 L3.22 3.48 L5.98 4.64 A6.0 6.0 0 0 1 7.05 4.02Z" fill="none" stroke="#e6e6e6" stroke-width="1.3" stroke-linejoin="round"/><circle cx="9.5" cy="9.5" r="2.3" fill="none" stroke="#e6e6e6" stroke-width="1.3"/></svg>
<svg style="left:237px;top:779.5px" width="10" height="16" viewBox="0 0 10 16"><path d="M1 3.8Q1.2 0.8 4.8 0.8Q8.6 0.8 8.6 4.2Q8.6 6 6.6 7.4Q4.9 8.6 4.9 10.8V11.6" fill="none" stroke="#e6e6e6" stroke-width="1.4" stroke-linecap="round"/><circle cx="4.9" cy="14.6" r="1" fill="#e6e6e6"/></svg>
<div class="a" style="left:438px;top:770.4px;width:151px;height:35px;background:#4cc2ff;border-radius:5px"></div>
<div class="a" style="left:545px;top:770.4px;width:1px;height:35px;background:#3aa6de;"></div>
<svg style="left:451px;top:779px" width="19" height="18" viewBox="0 0 19 18"><path d="M8 3H3Q1 3 1 5V13Q1 15 3 15H8M11 3H16Q18 3 18 5V13Q18 15 16 15H11" fill="none" stroke="#a6dcfb" stroke-width="1.3"/><path d="M9.5 1V17M7.5 1H11.5M7.5 17H11.5" stroke="#a6dcfb" stroke-width="1.3"/><path d="M3.5 12L5.5 6L7.5 12M4.2 10H6.8" fill="none" stroke="#a6dcfb" stroke-width="1.1"/></svg>
<div class="t" style="left:481.00px;top:781.64px;font-size:15.71px;color:#a6dcfb;transform:scaleX(1.0368);transform-origin:left top;">Aplicar</div>
<svg style="left:563px;top:787px" width="10" height="6" viewBox="0 0 10 6"><path d="M0.6 0.6L5 5L9.4 0.6" fill="none" stroke="#a6dcfb" stroke-width="1.2"/></svg>
<div class="a" style="left:604.9px;top:242.5px;width:638.6px;height:563.5px;background:#282828;border-radius:8px;border:1px solid #1e1e1e"></div>
<div class="a" style="left:616px;top:254px;width:24.5px;height:24.5px;background:#4cc2ff;border-radius:2px"></div>
<svg style="left:620.5px;top:260px" width="16" height="12" viewBox="0 0 16 12"><path d="M1 6.2L5.5 10.7L15 1.2" fill="none" stroke="#0b3553" stroke-width="1.6"/></svg>
<svg style="left:657.7px;top:258px" width="14" height="17" viewBox="0 0 14 17"><path d="M0 0H9.5L13.6 4.1V17H0Z" fill="#ffffff"/><path d="M9.5 0V4.1H13.6" fill="#d8d8d8"/></svg>
<div class="t" style="left:681.60px;top:259.04px;font-size:16.43px;color:#f2f2f2;transform:scaleX(1.0265);transform-origin:left top;">Original (7)</div>
<div class="a" style="left:920px;top:256px;width:1px;height:19px;background:#3a3a3a;"></div>
<div class="t" style="left:928.20px;top:258.84px;font-size:16.43px;color:#f2f2f2;transform:scaleX(1.0499);transform-origin:left top;">Nome mudado (0)</div>
<svg style="left:1204px;top:258px" width="18" height="17" viewBox="0 0 18 17"><path d="M1.6 0.9H16.4Q17.5 1 16.7 2L11.3 8.2Q10.8 8.8 10.8 9.5V15.2Q10.8 16.2 9.9 15.6L8 14.4Q7.2 13.9 7.2 13V9.5Q7.2 8.8 6.7 8.2L1.3 2Q0.5 1 1.6 0.9Z" fill="none" stroke="#e6e6e6" stroke-width="1.3" stroke-linejoin="round"/></svg>
<div class="a" style="left:605.4px;top:289.0px;width:637.6px;height:1.5px;background:#383838;"></div>
<div class="a" style="left:605.4px;top:324.15px;width:637.6px;height:1.5px;background:#383838;"></div>
<div class="a" style="left:605.4px;top:359.3px;width:637.6px;height:1.5px;background:#383838;"></div>
<div class="a" style="left:605.4px;top:394.45px;width:637.6px;height:1.5px;background:#383838;"></div>
<div class="a" style="left:605.4px;top:429.6px;width:637.6px;height:1.5px;background:#383838;"></div>
<div class="a" style="left:605.4px;top:464.75px;width:637.6px;height:1.5px;background:#383838;"></div>
<div class="a" style="left:605.4px;top:499.9px;width:637.6px;height:1.5px;background:#383838;"></div>
<div class="a" style="left:605.4px;top:535.05px;width:637.6px;height:1.5px;background:#383838;"></div>
<div class="a" style="left:616px;top:295.0px;width:24.5px;height:24.5px;background:#4cc2ff;border-radius:2px"></div>
<svg style="left:620.5px;top:301.0px" width="16" height="12" viewBox="0 0 16 12"><path d="M1 6.2L5.5 10.7L15 1.2" fill="none" stroke="#0b3553" stroke-width="1.6"/></svg>
<svg style="left:657.7px;top:298.5px" width="14" height="17" viewBox="0 0 14 17"><path d="M0 0H9.5L13.6 4.1V17H0Z" fill="#ffffff"/><path d="M9.5 0V4.1H13.6" fill="#d8d8d8"/></svg>
<div class="t" style="left:681.60px;top:300.51px;font-size:14.57px;color:#d6d6d6;transform:scaleX(0.9314);transform-origin:left top;">Verão 2009 007.JPG</div>
<div class="a" style="left:616px;top:330.15px;width:24.5px;height:24.5px;background:#4cc2ff;border-radius:2px"></div>
<svg style="left:620.5px;top:336.15px" width="16" height="12" viewBox="0 0 16 12"><path d="M1 6.2L5.5 10.7L15 1.2" fill="none" stroke="#0b3553" stroke-width="1.6"/></svg>
<svg style="left:657.7px;top:333.65px" width="14" height="17" viewBox="0 0 14 17"><path d="M0 0H9.5L13.6 4.1V17H0Z" fill="#ffffff"/><path d="M9.5 0V4.1H13.6" fill="#d8d8d8"/></svg>
<div class="t" style="left:681.60px;top:335.66px;font-size:14.57px;color:#d6d6d6;transform:scaleX(0.9314);transform-origin:left top;">Verão 2009 008.JPG</div>
<div class="a" style="left:616px;top:365.3px;width:24.5px;height:24.5px;background:#4cc2ff;border-radius:2px"></div>
<svg style="left:620.5px;top:371.3px" width="16" height="12" viewBox="0 0 16 12"><path d="M1 6.2L5.5 10.7L15 1.2" fill="none" stroke="#0b3553" stroke-width="1.6"/></svg>
<svg style="left:657.7px;top:368.8px" width="14" height="17" viewBox="0 0 14 17"><path d="M0 0H9.5L13.6 4.1V17H0Z" fill="#ffffff"/><path d="M9.5 0V4.1H13.6" fill="#d8d8d8"/></svg>
<div class="t" style="left:681.60px;top:370.81px;font-size:14.57px;color:#d6d6d6;transform:scaleX(0.9314);transform-origin:left top;">Verão 2009 009.JPG</div>
<div class="a" style="left:616px;top:400.45px;width:24.5px;height:24.5px;background:#4cc2ff;border-radius:2px"></div>
<svg style="left:620.5px;top:406.45px" width="16" height="12" viewBox="0 0 16 12"><path d="M1 6.2L5.5 10.7L15 1.2" fill="none" stroke="#0b3553" stroke-width="1.6"/></svg>
<svg style="left:657.7px;top:403.95px" width="14" height="17" viewBox="0 0 14 17"><path d="M0 0H9.5L13.6 4.1V17H0Z" fill="#ffffff"/><path d="M9.5 0V4.1H13.6" fill="#d8d8d8"/></svg>
<div class="t" style="left:681.60px;top:405.96px;font-size:14.57px;color:#d6d6d6;transform:scaleX(0.9129);transform-origin:left top;">Verão 2009 010.JPG</div>
<div class="a" style="left:616px;top:435.6px;width:24.5px;height:24.5px;background:#4cc2ff;border-radius:2px"></div>
<svg style="left:620.5px;top:441.6px" width="16" height="12" viewBox="0 0 16 12"><path d="M1 6.2L5.5 10.7L15 1.2" fill="none" stroke="#0b3553" stroke-width="1.6"/></svg>
<svg style="left:657.7px;top:439.1px" width="14" height="17" viewBox="0 0 14 17"><path d="M0 0H9.5L13.6 4.1V17H0Z" fill="#ffffff"/><path d="M9.5 0V4.1H13.6" fill="#d8d8d8"/></svg>
<div class="t" style="left:681.60px;top:441.11px;font-size:14.57px;color:#d6d6d6;transform:scaleX(0.9039);transform-origin:left top;">Verão 2009 011.JPG</div>
<div class="a" style="left:616px;top:470.75px;width:24.5px;height:24.5px;background:#4cc2ff;border-radius:2px"></div>
<svg style="left:620.5px;top:476.75px" width="16" height="12" viewBox="0 0 16 12"><path d="M1 6.2L5.5 10.7L15 1.2" fill="none" stroke="#0b3553" stroke-width="1.6"/></svg>
<svg style="left:657.7px;top:474.25px" width="14" height="17" viewBox="0 0 14 17"><path d="M0 0H9.5L13.6 4.1V17H0Z" fill="#ffffff"/><path d="M9.5 0V4.1H13.6" fill="#d8d8d8"/></svg>
<div class="t" style="left:681.60px;top:476.26px;font-size:14.57px;color:#d6d6d6;transform:scaleX(0.9129);transform-origin:left top;">Verão 2009 012.JPG</div>
<div class="a" style="left:616px;top:505.9px;width:24.5px;height:24.5px;background:#4cc2ff;border-radius:2px"></div>
<svg style="left:620.5px;top:511.9px" width="16" height="12" viewBox="0 0 16 12"><path d="M1 6.2L5.5 10.7L15 1.2" fill="none" stroke="#0b3553" stroke-width="1.6"/></svg>
<svg style="left:657.7px;top:509.4px" width="14" height="17" viewBox="0 0 14 17"><path d="M0 0H9.5L13.6 4.1V17H0Z" fill="#ffffff"/><path d="M9.5 0V4.1H13.6" fill="#d8d8d8"/></svg>
<div class="t" style="left:681.60px;top:511.41px;font-size:14.57px;color:#d6d6d6;transform:scaleX(0.9129);transform-origin:left top;">Verão 2009 013.JPG</div>
</div>
</body></html>
